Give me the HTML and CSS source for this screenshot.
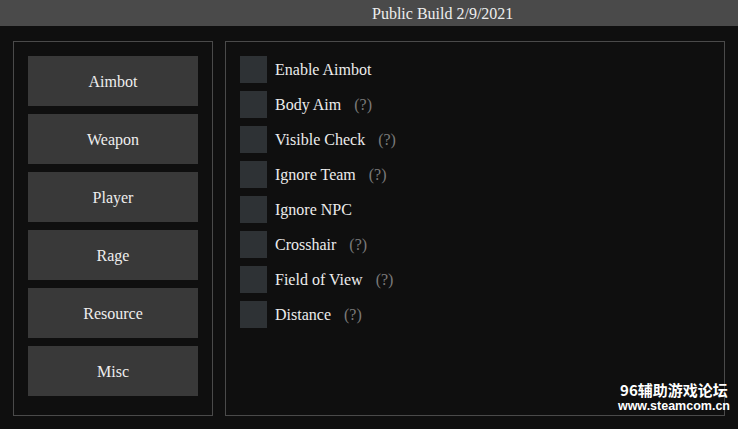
FILE: index.html
```html
<!DOCTYPE html>
<html lang="en">
<head>
    <meta charset="UTF-8">
    <meta name="viewport" content="width=device-width, initial-scale=1.0">
    <title>Public Build 2/9/2021</title>
    <link rel="stylesheet" href="styles.css">
</head>
<body>
    <div class="titlebar">Public Build 2/9/2021</div>

    <div class="main">
        <div class="sidebar">
            <div class="tab">Aimbot</div>
            <div class="tab">Weapon</div>
            <div class="tab">Player</div>
            <div class="tab">Rage</div>
            <div class="tab">Resource</div>
            <div class="tab">Misc</div>
        </div>

        <div class="content">
            <div class="option"><span class="check"></span><span class="label">Enable Aimbot</span></div>
            <div class="option"><span class="check"></span><span class="label">Body Aim</span><span class="hint">(?)</span></div>
            <div class="option"><span class="check"></span><span class="label">Visible Check</span><span class="hint">(?)</span></div>
            <div class="option"><span class="check"></span><span class="label">Ignore Team</span><span class="hint">(?)</span></div>
            <div class="option"><span class="check"></span><span class="label">Ignore NPC</span></div>
            <div class="option"><span class="check"></span><span class="label">Crosshair</span><span class="hint">(?)</span></div>
            <div class="option"><span class="check"></span><span class="label">Field of View</span><span class="hint">(?)</span></div>
            <div class="option"><span class="check"></span><span class="label">Distance</span><span class="hint">(?)</span></div>
        </div>
    </div>

    <!-- watermark -->
    <div class="watermark">
        <div class="wm-title">96辅助游戏论坛</div>
        <div class="wm-url">www.steamcom.cn</div>
    </div>
</body>
</html>
```

FILE: styles.css
```css
body {
    margin: 0;
    height: 429px;
    background-color: #0f0f0f;
    color: #ececec;
    font-family: "Liberation Serif", "DejaVu Serif", serif;
    font-size: 16px;
    overflow: hidden;
    position: relative;
}

.titlebar {
    height: 26px;
    line-height: 27px;
    background-color: #4a4a4a;
    padding-left: 372px;
    color: #eeeeee;
}

.main {
    display: flex;
    gap: 12px;
    padding: 15px 13px 0 13px;
}

.sidebar {
    width: 170px;
    height: 359px;
    padding: 14px 14px 0 14px;
    border: 1px solid #4a4a4a;
    display: flex;
    flex-direction: column;
    gap: 8px;
}

.tab {
    height: 50px;
    padding-top: 2px;
    box-sizing: border-box;
    background-color: #393939;
    display: flex;
    align-items: center;
    justify-content: center;
    color: #eeeeee;
}

.content {
    flex-grow: 1;
    height: 359px;
    padding: 14px 14px 0 14px;
    border: 1px solid #4a4a4a;
    display: flex;
    flex-direction: column;
    gap: 8px;
}

.option {
    display: flex;
    align-items: center;
    height: 27px;
}

.check {
    width: 27px;
    height: 27px;
    background-color: #2e3235;
    flex-shrink: 0;
}

.label {
    margin-left: 8px;
    padding-top: 1px;
}

.hint {
    margin-left: 13px;
    padding-top: 1px;
    color: #7a7a7a;
}

.watermark {
    position: absolute;
    right: 8px;
    bottom: 16px;
    text-align: center;
    color: #ffffff;
    font-family: "Noto Sans CJK SC", "Liberation Sans", sans-serif;
    font-weight: bold;
}

.wm-title {
    font-size: 15px;
    line-height: 18px;
}

.wm-url {
    font-family: "Liberation Sans", "Noto Sans CJK SC", sans-serif;
    font-size: 12.5px;
    line-height: 14px;
}
```
